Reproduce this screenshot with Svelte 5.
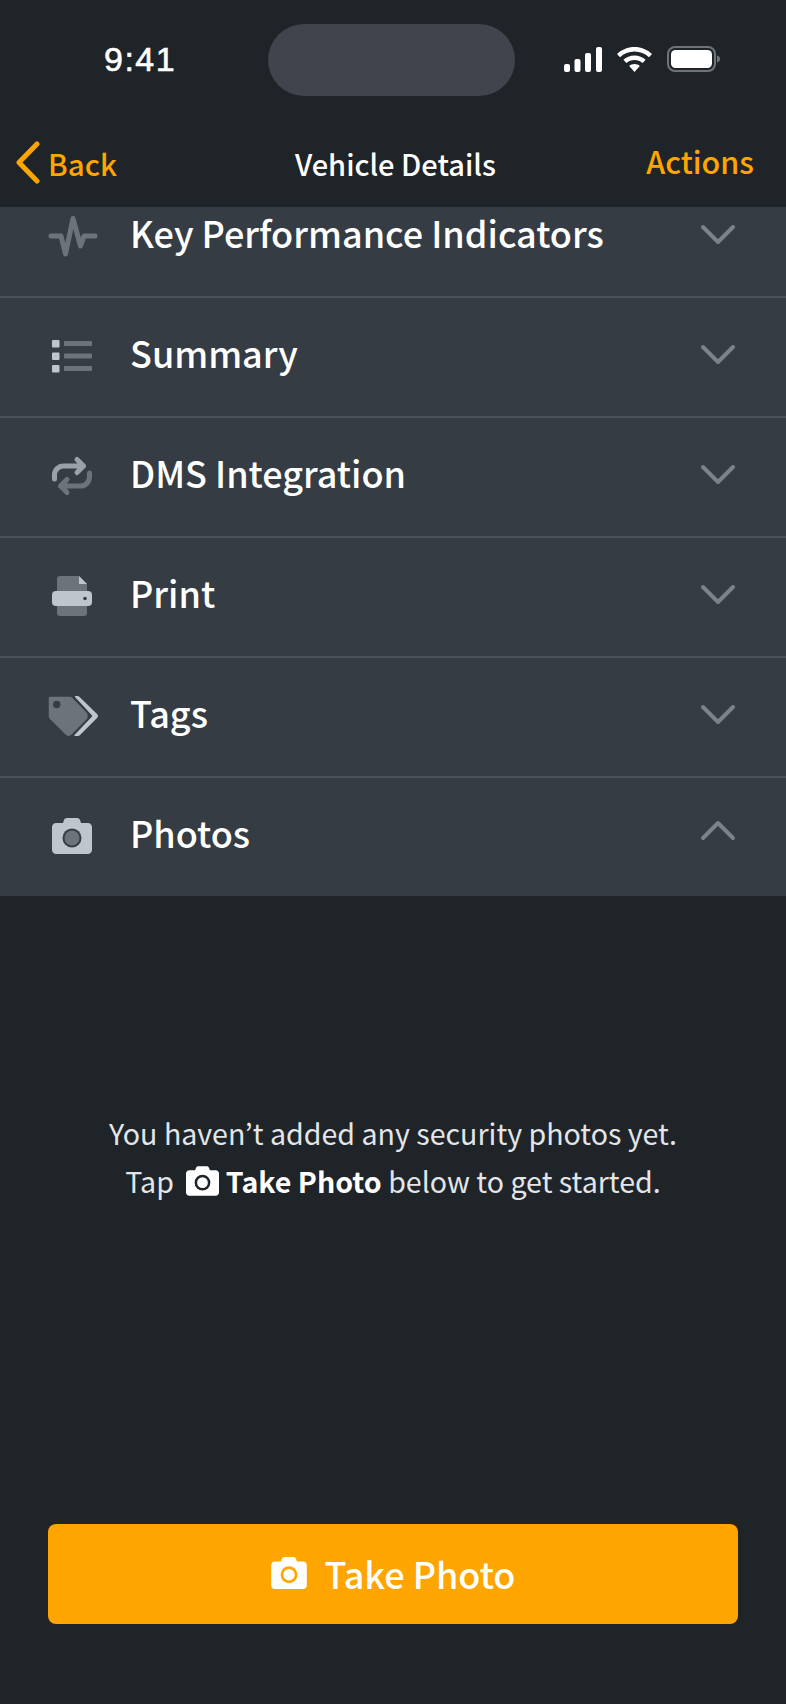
<script>
  const rows = [
    { id: 'kpi', label: 'Key Performance Indicators' },
    { id: 'summary', label: 'Summary' },
    { id: 'dms', label: 'DMS Integration' },
    { id: 'print', label: 'Print' },
    { id: 'tags', label: 'Tags' },
    { id: 'photos', label: 'Photos', open: true }
  ];
</script>

{#snippet camera(cls)}
  <svg class={cls} viewBox="0 0 40 36" aria-hidden="true">
    <path class="cam-body" d="M11 5l1.2-3.2C12.700.7 13.700 0 14.900 0h10.200c1.200 0 2.200.7 2.700 1.800L29 5h7c2.200 0 4 1.800 4 4v23c0 2.200-1.800 4-4 4H4c-2.200 0-4-1.800-4-4V9c0-2.200 1.800-4 4-4z"/>
    <circle class="cam-ring" cx="20" cy="20" r="9.500"/>
    <circle class="cam-lens" cx="20" cy="20" r="6.500"/>
  </svg>
{/snippet}

<div class="screen">
  <header class="top">
    <div class="status">
      <span class="time">9:41</span>
      <div class="island"></div>
      <div class="indicators">
        <svg class="signal" viewBox="0 0 38 25" aria-hidden="true">
          <rect x="0" y="17" width="6" height="8" rx="2"/>
          <rect x="10.500" y="12" width="6" height="13" rx="2"/>
          <rect x="21" y="6" width="6" height="19" rx="2"/>
          <rect x="32" y="0" width="6" height="25" rx="2"/>
        </svg>
        <svg class="wifi" viewBox="0 0 35 25" aria-hidden="true">
          <path d="M17.500 0C24.300 0 30.500 2.700 35 7l-3 3.200c-3.700-3.500-8.900-5.700-14.500-5.700S6.700 6.700 3 10.200L0 7C4.500 2.700 10.700 0 17.500 0z"/>
          <path d="M17.500 8.500c4.300 0 8.200 1.700 11.100 4.300l-3 3.200c-2.100-1.900-5-3.100-8.100-3.100s-6 1.200-8.100 3.100l-3-3.200c2.900-2.600 6.800-4.300 11.100-4.300z"/>
          <path d="M17.500 17c2 0 3.900.7 5.300 1.900L17.500 25l-5.300-6.100c1.400-1.200 3.300-1.900 5.300-1.900z"/>
        </svg>
        <svg class="battery" viewBox="0 0 53 26" aria-hidden="true">
          <rect class="batt-frame" x="1" y="1" width="47" height="24" rx="7"/>
          <rect class="batt-fill" x="4" y="4" width="41" height="18" rx="4.500"/>
          <path class="batt-nub" d="M50 9.500c1.800.5 3 1.800 3 3.500s-1.200 3-3 3.500z"/>
        </svg>
      </div>
    </div>
    <nav class="nav">
      <div class="back">
        <svg class="back-icon" viewBox="0 0 24 43" aria-hidden="true"><path d="M21 3L3 21.500 21 40"/></svg>
        <span>Back</span>
      </div>
      <span class="title">Vehicle Details</span>
      <span class="actions">Actions</span>
    </nav>
  </header>

  <main class="content">
    <section class="list">
      {#each rows as row}
        <div class="row">
          <svg class="icon" viewBox="0 0 50 50" aria-hidden="true">
            {#if row.id === 'kpi'}
              <path class="stroke-dark" d="M3 25H13L17.500 43 25 7.500 32.500 35 36 25H47"/>
            {:else if row.id === 'summary'}
              <rect class="light" x="4" y="9" width="7.500" height="7.500" rx="1"/>
              <rect class="light" x="4" y="21.500" width="7.500" height="7.500" rx="1"/>
              <rect class="light" x="4" y="34" width="7.500" height="7.500" rx="1"/>
              <rect class="dark" x="16" y="10" width="28" height="5" rx="1"/>
              <rect class="dark" x="16" y="22.500" width="28" height="5" rx="1"/>
              <rect class="dark" x="16" y="35" width="28" height="5" rx="1"/>
            {:else if row.id === 'dms'}
              <path class="stroke-mid" d="M6.500 28v-4a9 9 0 0 1 9-9H35.500M29 8.500L35.500 15 29 21.500"/>
              <path class="stroke-dark" d="M41.500 22v4a9 9 0 0 1-9 9H12.500M19 28.500L12.500 35 19 41.500"/>
            {:else if row.id === 'print'}
              <path class="dark" d="M9 8a3 3 0 0 1 3-3h19l8 8v8H9z"/>
              <path class="light" d="M31 5l8 8h-8z"/>
              <path class="dark" d="M9 35h30v7a3 3 0 0 1-3 3H12a3 3 0 0 1-3-3z"/>
              <rect class="light" x="4" y="20" width="40" height="15" rx="4"/>
              <circle class="hole" cx="37" cy="27.500" r="1.800"/>
            {:else if row.id === 'tags'}
              <path class="light" d="M27 5h2.500a3 3 0 0 1 2.100.9L48.800 22.800a3 3 0 0 1 0 4.400L32 44a3 3 0 0 1-2 1h-3l-1-.6L44.500 25 27 6z"/>
              <path class="tag-main" d="M2 5h20c1 0 2 .4 2.800 1.200L39 21c2 2 2 6 0 8L24 44c-2 2-5 2-7 0L1.200 28.200C.4 27.400 0 26.400 0 25.300V7c0-1.100.9-2 2-2z"/>
              <circle class="hole" cx="8.700" cy="13.500" r="3.700"/>
            {:else}
              <path class="light" d="M15 12l1-3c.4-1.200 1.500-2 2.800-2h10.400c1.300 0 2.400.8 2.800 2l1 3h7c2.200 0 4 1.800 4 4v23c0 2.200-1.800 4-4 4H8c-2.200 0-4-1.800-4-4V16c0-2.200 1.800-4 4-4z"/>
              <circle class="hole" cx="24" cy="27" r="9.500"/>
              <circle class="dark" cx="24" cy="27" r="7.500"/>
            {/if}
          </svg>
          <span class="label">{row.label}</span>
          <svg class="chev" class:open={row.open} viewBox="0 0 36 21" aria-hidden="true"><path d="M3 3l15 15L33 3"/></svg>
        </div>
      {/each}
    </section>

    <section class="empty">
      <p>You haven’t added any security photos yet.</p>
      <p class="tap">Tap {@render camera('cam-inline')} <strong>Take Photo</strong> below to get started.</p>
    </section>

    <button class="take" type="button">
      {@render camera('cam-btn')}
      <span>Take Photo</span>
    </button>
  </main>
</div>

<style>
  :global(body) {
    margin: 0;
    background: #1f2428;
  }

  .screen {
    display: flex;
    flex-direction: column;
    width: 786px;
    height: 1704px;
    overflow: hidden;
    background: #1f2428;
    color: #fff;
    font-family: "Noto Sans CJK JP", "Noto Sans", sans-serif;
  }

  .top {
    position: relative;
    z-index: 1;
    flex: none;
    height: 207px;
    background: #1f2428;
  }

  .status {
    display: grid;
    grid-template-columns: 268px 247px 1fr;
    height: 120px;
    padding-top: 24px;
    box-sizing: border-box;
  }

  .time {
    padding: 15px 0 0 104px;
    font: 400 34px/40px "Liberation Sans", Arial, sans-serif;
    letter-spacing: 1.5px;
    -webkit-text-stroke: 0.6px #fff;
  }

  .island {
    height: 72px;
    border-radius: 36px / 36px;
    background: #3f444d;
  }

  .indicators {
    display: flex;
    align-items: flex-start;
    padding: 22px 0 0 49px;
  }

  .signal {
    width: 38px;
    height: 25px;
    margin-top: 1px;
    fill: #fff;
  }

  .wifi {
    width: 35px;
    height: 25px;
    margin: 1px 0 0 15px;
    fill: #fff;
  }

  .battery {
    width: 53px;
    height: 26px;
    margin-left: 15px;
  }

  .batt-frame {
    fill: none;
    stroke: #6f7479;
    stroke-width: 2;
  }

  .batt-fill {
    fill: #fff;
  }

  .batt-nub {
    fill: #6f7479;
  }

  .nav {
    display: grid;
    grid-template-columns: 279px 1fr auto;
    align-items: center;
    height: 87px;
    padding: 0 32px 0 16px;
  }

  .back {
    display: flex;
    align-items: center;
    gap: 8px;
    color: #ffa500;
    font-size: 29.500px;
    font-weight: 500;
  }

  .back span {
    margin-top: -2px;
  }

  .back-icon {
    width: 24px;
    height: 43px;
    margin-top: -2px;
    fill: none;
    stroke: #ffa500;
    stroke-width: 5;
    stroke-linecap: round;
    stroke-linejoin: round;
  }

  .title {
    margin-top: -2px;
    font-size: 29px;
    font-weight: 500;
  }

  .actions {
    margin-top: -6px;
    color: #ffa500;
    font-size: 30.500px;
    font-weight: 500;
  }

  .content {
    display: flex;
    flex: 1;
    flex-direction: column;
    min-height: 0;
  }

  .list {
    margin-top: -29px;
    background: #363c43;
  }

  .row {
    display: flex;
    align-items: center;
    height: 118px;
    padding: 0 48px;
    border-top: 2px solid #4c5058;
  }

  .row:first-child {
    border-top: 0;
  }

  .icon {
    flex: none;
    width: 50px;
    height: 50px;
    margin-top: -2px;
  }

  .light {
    fill: #bfc5cc;
  }

  .dark {
    fill: #6c737b;
  }

  .tag-main {
    fill: #6c737b;
    stroke: #363c43;
    stroke-width: 1.500;
  }

  .hole {
    fill: #363c43;
  }

  .stroke-dark,
  .stroke-mid {
    fill: none;
    stroke-width: 5;
    stroke-linecap: round;
    stroke-linejoin: round;
  }

  .stroke-dark {
    stroke: #6c737b;
  }

  .stroke-mid {
    stroke: #9aa1a9;
  }

  .label {
    flex: 1;
    margin: -10px 0 0 32px;
    font-size: 36px;
    font-weight: 500;
  }

  .chev {
    flex: none;
    width: 36px;
    height: 21px;
    margin: -6px 2px 0 0;
    fill: none;
    stroke: #7c828a;
    stroke-width: 4;
    stroke-linecap: round;
    stroke-linejoin: round;
  }

  .chev.open {
    margin-top: -14px;
    transform: scaleY(-1);
  }

  .empty {
    padding-top: 213px;
    text-align: center;
    color: #e3e6e9;
    font-size: 28.600px;
    line-height: 48px;
  }

  .empty p {
    margin: 0;
  }

  .empty strong {
    color: #fff;
    font-weight: 700;
  }

  .cam-inline {
    width: 33px;
    height: 30px;
    margin: 0 0 0 6px;
    vertical-align: -3px;
  }

  .cam-btn {
    width: 36px;
    height: 32px;
  }

  .cam-body {
    fill: #fff;
  }

  .cam-ring {
    fill: #1f2428;
  }

  .cam-lens {
    fill: #fff;
  }

  .take .cam-ring {
    fill: #ffa500;
  }

  .take {
    display: flex;
    align-items: center;
    justify-content: center;
    gap: 18px;
    height: 100px;
    margin: auto 48px 80px;
    padding: 0 0 2px;
    border: 0;
    border-radius: 8px;
    background: #ffa500;
    color: #fff;
    font: 500 36px "Noto Sans CJK JP", "Noto Sans", sans-serif;
  }
</style>
